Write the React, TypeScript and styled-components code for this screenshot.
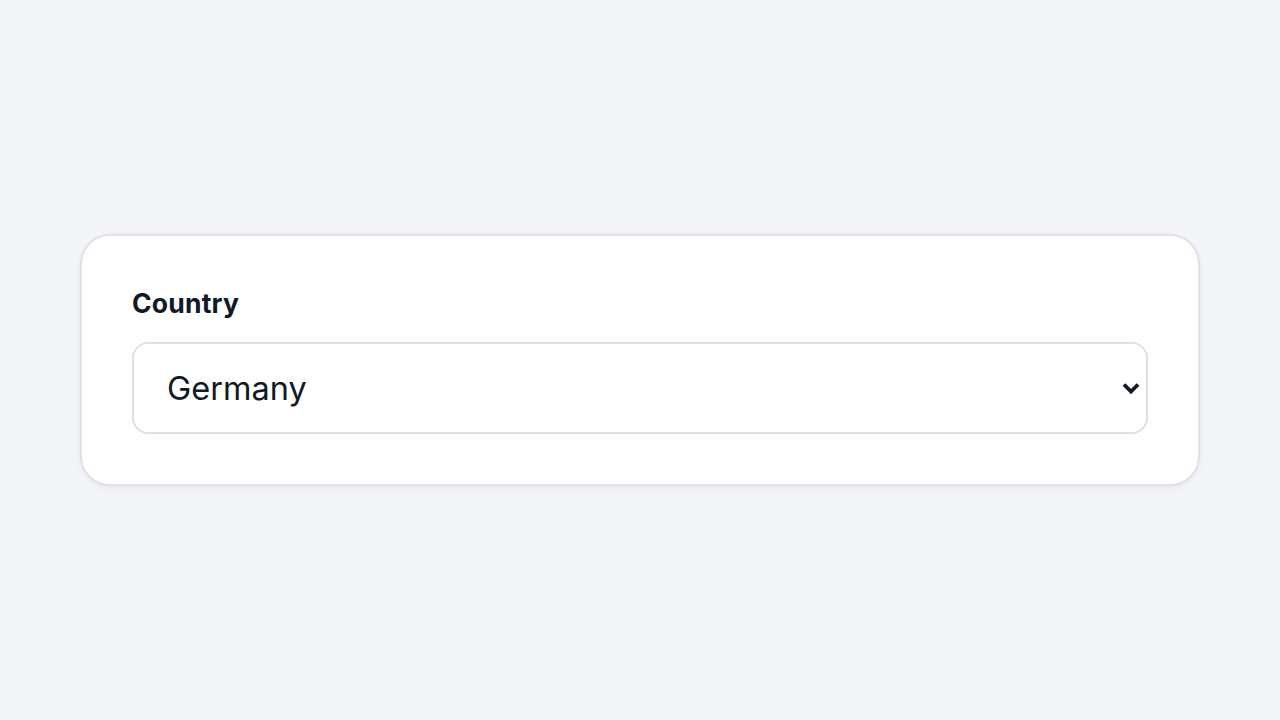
import React from "react";
import styled, { createGlobalStyle } from "styled-components";

const Global = createGlobalStyle`
  html, body { margin: 0; padding: 0; }
  body {
    background: #f4f5f9;
    font-family: Inter, "Noto Sans", sans-serif;
    color: #111827;
  }
`;

const Page = styled.div`
  min-height: 720px;
  display: flex;
  align-items: center;
  justify-content: center;
  box-sizing: border-box;
`;

const Card = styled.div`
  box-sizing: border-box;
  width: 1120px;
  background: #ffffff;
  border: 2px solid #dfe2ea;
  border-radius: 30px;
  padding: 50px;
  box-shadow: 0 2px 6px rgba(17, 24, 39, 0.06);
  display: flex;
  flex-direction: column;
`;

const Label = styled.label`
  font-size: 26.5px;
  font-weight: 700;
  line-height: 35px;
  color: #111827;
  margin-bottom: 21px;
  letter-spacing: 0.2px;
`;

const SelectWrap = styled.div`
  position: relative;
`;

const Select = styled.select`
  appearance: none;
  -webkit-appearance: none;
  box-sizing: border-box;
  width: 100%;
  height: 92px;
  border: 2px solid #dcdfe8;
  border-radius: 16px;
  background: #ffffff;
  padding: 0 60px 0 33px;
  font-family: Inter, "Noto Sans", sans-serif;
  font-size: 32.5px;
  color: #111827;
  outline: none;
`;

const Chevron = styled.svg`
  position: absolute;
  right: 7px;
  top: 50%;
  width: 20px;
  height: 14px;
  transform: translateY(-50%);
  pointer-events: none;
`;

export default function App() {
  return (
    <>
      <Global />
      <Page>
        <Card>
          <Label htmlFor="country">Country</Label>
          <SelectWrap>
            <Select id="country" defaultValue="Germany">
              <option>Germany</option>
              <option>France</option>
              <option>Spain</option>
            </Select>
            <Chevron viewBox="0 0 20 14">
              <path d="M3 3.5 L10 10.5 L17 3.5" fill="none" stroke="#111827" strokeWidth="3.8" />
            </Chevron>
          </SelectWrap>
        </Card>
      </Page>
    </>
  );
}
